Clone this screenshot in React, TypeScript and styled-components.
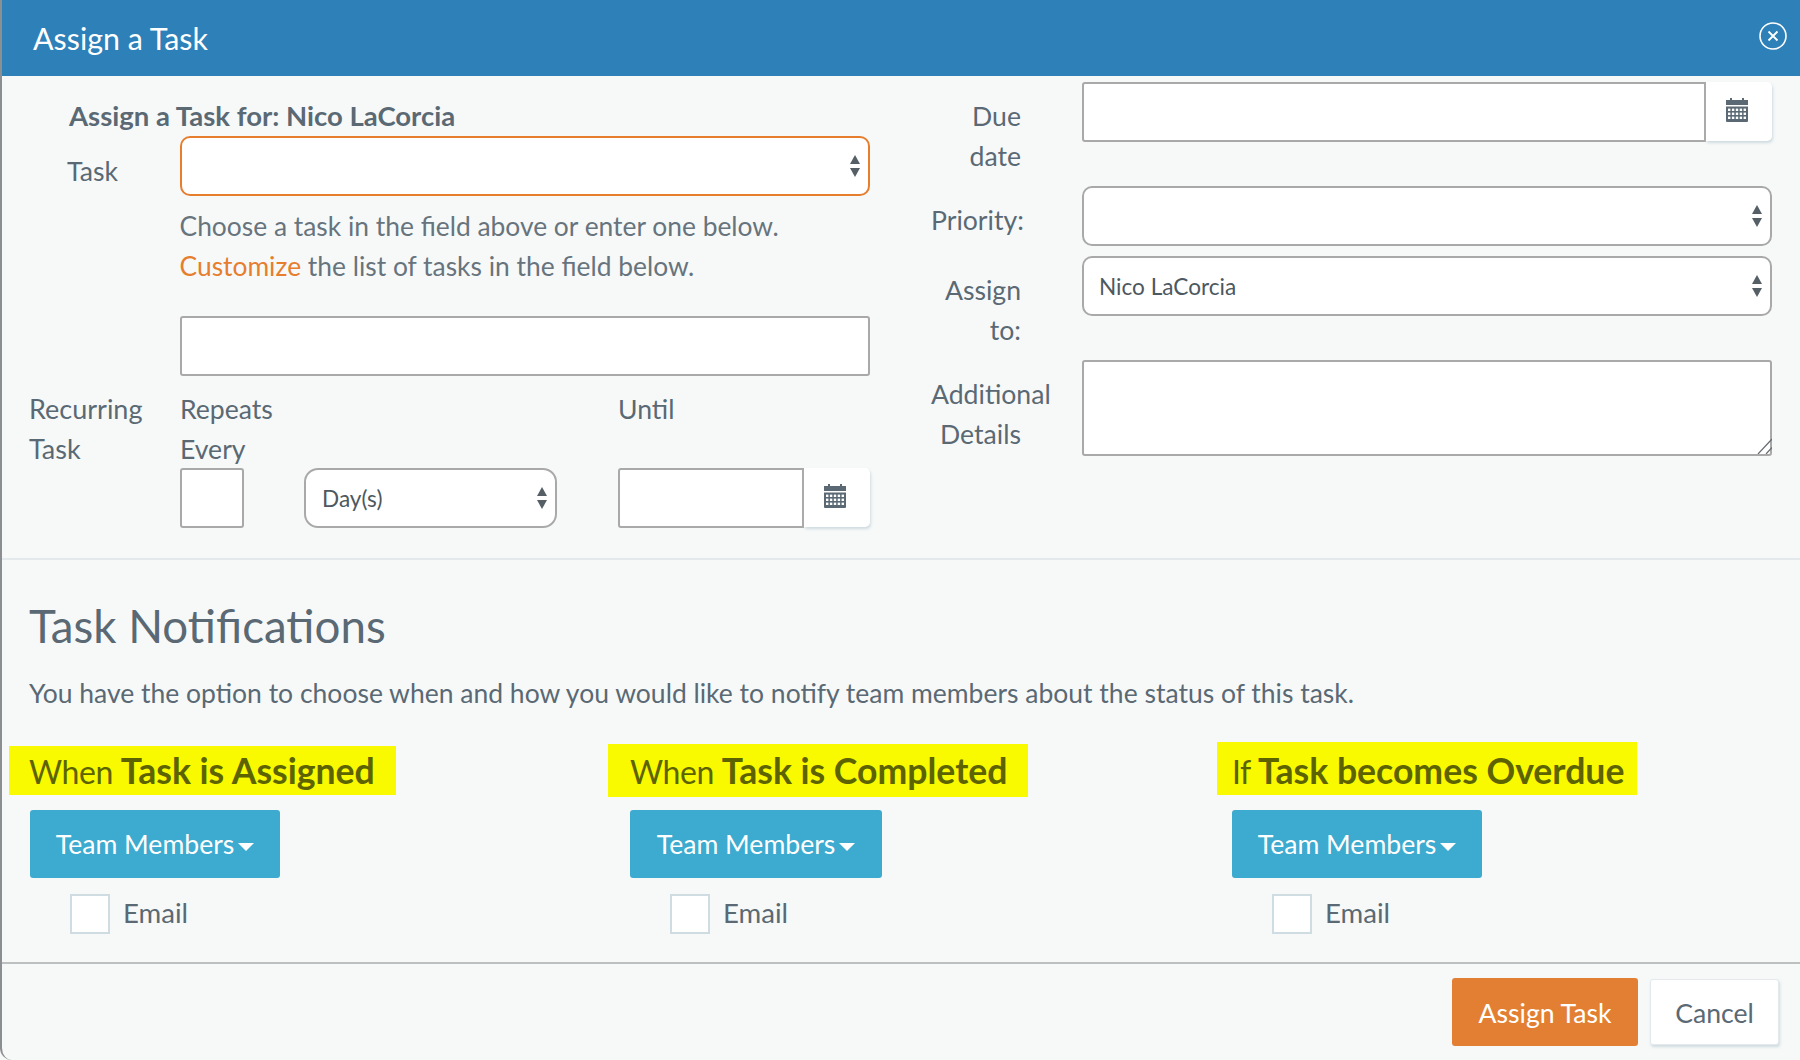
import React from "react";
import styled, { createGlobalStyle } from "styled-components";

const GlobalStyle = createGlobalStyle`
    html, body {
        margin: 0;
        padding: 0;
        background: #f7f9f9;
    }
    * {
        box-sizing: border-box;
    }
    body {
        color: #5a6974;
        font-family: Lato, "Open Sans", sans-serif;
        font-size: 26.6px;
        line-height: 40px;
    }
`;

const CalendarIcon: React.FC = () => {
    const cells = [];
    for (let row = 0; row < 3; row++) {
        for (let col = 0; col < 5; col++) {
            cells.push(
                <rect key={`${row}-${col}`} x={2 + col * 3.9} y={10.6 + row * 4} width="2.4" height="2.4" fill="#fff" />
            );
        }
    }
    return (
        <svg width="22" height="24" viewBox="0 0 22 24" fill="#5a6974">
            <rect x="4" y="0" width="2" height="3" />
            <rect x="16" y="0" width="2" height="3" />
            <rect x="0" y="2" width="22" height="5" />
            <path d="M0 8.5h22V23a1 1 0 0 1-1 1H1a1 1 0 0 1-1-1z" />
            {cells}
        </svg>
    );
};

const SelectArrows: React.FC = () => (
    <ArrowSvg width="12" height="22" viewBox="0 0 12 22" fill="#555f66">
        <path d="M6 0l5 9H1z" />
        <path d="M6 22l5-9H1z" />
    </ArrowSvg>
);

const SelectField: React.FC<{ value?: string; $radius?: number; $focused?: boolean; width?: number }> = ({
    value,
    $radius,
    $focused,
    width,
}) => (
    <SelectWrap $width={width}>
        <NativeSelect defaultValue={value ?? ""} $radius={$radius} $focused={$focused}>
            <option value={value ?? ""}>{value ?? ""}</option>
        </NativeSelect>
        <SelectArrows />
    </SelectWrap>
);

const DateField: React.FC = () => (
    <DateGroup>
        <DateInput type="text" />
        <DateAddon>
            <CalendarIcon />
        </DateAddon>
    </DateGroup>
);

const notifications = [
    {
        lead: "When",
        strong: "Task is Assigned",
        top: 4,
        padTop: 6,
        padBottom: 3,
        left: -21,
        padLeft: 20,
        padRight: 21,
        below: 15,
        buttonWidth: 250,
    },
    {
        lead: "When",
        strong: "Task is Completed",
        top: 2,
        padTop: 8,
        padBottom: 5,
        left: -22,
        padLeft: 22,
        padRight: 21,
        below: 13,
        buttonWidth: 252,
    },
    {
        lead: "If",
        strong: "Task becomes Overdue",
        top: 0,
        padTop: 10,
        padBottom: 3,
        left: -15,
        padLeft: 15,
        padRight: 13,
        below: 15,
        buttonWidth: 250,
    },
];

const App: React.FC = () => {
    return (
        <Modal>
            <GlobalStyle />
            <Header>
                <HeaderTitle>Assign a Task</HeaderTitle>
                <CloseButton aria-label="Close">
                    <svg width="28" height="28" viewBox="0 0 28 28" fill="none" stroke="#fff" strokeWidth="1.6">
                        <circle cx="14" cy="14" r="13" />
                        <path d="M9.5 9.5l9 9M18.5 9.5l-9 9" strokeWidth="1.8" />
                    </svg>
                </CloseButton>
            </Header>

            <FormSection>
                <LeftForm>
                    <FormTitle>Assign a Task for: Nico LaCorcia</FormTitle>
                    <TaskRow>
                        <TaskLabel>Task</TaskLabel>
                        <SelectField $focused />
                    </TaskRow>
                    <HelpText>
                        Choose a task in the field above or enter one below.
                        <br />
                        <OrangeLink>Customize</OrangeLink> the list of tasks in the field below.
                    </HelpText>
                    <CustomTaskInput type="text" />
                    <RecurringRow>
                        <RecurringLabel>
                            Recurring
                            <br />
                            Task
                        </RecurringLabel>
                        <RecurringFields>
                            <RepeatLabel>
                                Repeats
                                <br />
                                Every
                            </RepeatLabel>
                            <RepeatLabel>Until</RepeatLabel>
                            <RepeatControls>
                                <NumberInput type="text" />
                                <SelectField value="Day(s)" $radius={14} width={253} />
                            </RepeatControls>
                            <DateField />
                        </RecurringFields>
                    </RecurringRow>
                </LeftForm>

                <RightForm>
                    <RightRow>
                        <RightLabel>Due date</RightLabel>
                        <DateField />
                    </RightRow>
                    <RightRow>
                        <RightLabel>Priority:</RightLabel>
                        <SelectField />
                    </RightRow>
                    <RightRow>
                        <RightLabel>Assign to:</RightLabel>
                        <SelectField value="Nico LaCorcia" />
                    </RightRow>
                    <RightRow>
                        <RightLabel>Additional Details</RightLabel>
                        <DetailsWrap>
                            <DetailsArea />
                            <ResizeGrip width="16" height="16" viewBox="0 0 16 16" stroke="#666d72" strokeWidth="1.2">
                                <path d="M2 16L16 1M10 16l6-6.5" />
                            </ResizeGrip>
                        </DetailsWrap>
                    </RightRow>
                </RightForm>
            </FormSection>

            <NotificationSection>
                <SectionTitle>Task Notifications</SectionTitle>
                <SectionText>
                    You have the option to choose when and how you would like to notify team members about the status
                    of this task.
                </SectionText>
                <NotificationGrid>
                    {notifications.map((item) => (
                        <NotificationColumn key={item.strong}>
                            <Highlight
                                $top={item.top}
                                $padTop={item.padTop}
                                $padBottom={item.padBottom}
                                $left={item.left}
                                $padLeft={item.padLeft}
                                $padRight={item.padRight}
                                $below={item.below}
                            >
                                {item.lead} <strong>{item.strong}</strong>
                            </Highlight>
                            <TeamButton $width={item.buttonWidth}>
                                Team Members
                                <Caret />
                            </TeamButton>
                            <EmailRow>
                                <EmailCheck />
                                <EmailText>Email</EmailText>
                            </EmailRow>
                        </NotificationColumn>
                    ))}
                </NotificationGrid>
            </NotificationSection>

            <Footer>
                <PrimaryButton>Assign Task</PrimaryButton>
                <CancelButton>Cancel</CancelButton>
            </Footer>
        </Modal>
    );
};

export default App;

const Modal = styled.div`
    background: #f7f9f9;
    border-bottom-left-radius: 12px;
    border-left: 2px solid #8c8f91;
    display: flex;
    flex-direction: column;
    height: 1060px;
    overflow: hidden;
    width: 1800px;
`;

const Header = styled.header`
    align-items: center;
    background: #2e80b8;
    display: flex;
    flex: none;
    height: 76px;
    justify-content: space-between;
    padding: 0 13px 0 31px;
`;

const HeaderTitle = styled.h1`
    color: #fff;
    font-size: 30.4px;
    font-weight: 400;
    margin: 0;
`;

const CloseButton = styled.button`
    background: none;
    border: none;
    display: flex;
    margin-bottom: 4px;
    padding: 0;
`;

const FormSection = styled.section`
    border-bottom: 2px solid #e4e9eb;
    display: flex;
    flex: none;
    height: 484px;
`;

const LeftForm = styled.div`
    padding: 22px 0 0 27px;
    width: 929px;
`;

const FormTitle = styled.h2`
    font-size: 27.5px;
    font-weight: 700;
    line-height: 36px;
    margin: 0 0 2px;
    padding-left: 40px;
`;

const TaskRow = styled.div`
    display: grid;
    grid-template-columns: 151px 690px;
`;

const TaskLabel = styled.label`
    padding: 15px 0 0 38px;
`;

const HelpText = styled.p`
    color: #67747d;
    font-size: 26.4px;
    margin: 10px 0 0 150.5px;
`;

const OrangeLink = styled.a`
    color: #e67e2e;
`;

const fieldBorder = `
    background: #fff;
    border: 2px solid #a9a9a9;
    display: block;
    font-family: inherit;
    height: 60px;
    outline: none;
`;

const CustomTaskInput = styled.input`
    ${fieldBorder}
    border-radius: 3px;
    margin: 30px 0 0 151px;
    width: 690px;
`;

const RecurringRow = styled.div`
    display: grid;
    grid-template-columns: 151px 690px;
    margin-top: 13px;
`;

const RecurringLabel = styled.div`
    font-size: 27px;
`;

const RecurringFields = styled.div`
    display: grid;
    grid-template-columns: 438px 252px;
    grid-template-rows: 79px 60px;
`;

const RepeatLabel = styled.div``;

const RepeatControls = styled.div`
    column-gap: 60px;
    display: flex;
`;

const NumberInput = styled.input`
    ${fieldBorder}
    border-radius: 3px;
    width: 64px;
`;

const SelectWrap = styled.div<{ $width?: number }>`
    position: relative;
    width: ${(p) => (p.$width ? `${p.$width}px` : "100%")};
`;

const NativeSelect = styled.select<{ $radius?: number; $focused?: boolean }>`
    ${fieldBorder}
    appearance: none;
    border-color: ${(p) => (p.$focused ? "#e67e2e" : "#a9a9a9")};
    border-radius: ${(p) => p.$radius ?? 10}px;
    color: #4d5860;
    font-size: 22.6px;
    padding: 0 30px 0 ${(p) => (p.$radius ? 16 : 15)}px;
    width: 100%;
`;

const ArrowSvg = styled.svg`
    pointer-events: none;
    position: absolute;
    right: 9px;
    top: 19px;
`;

const DateGroup = styled.div`
    display: flex;
    width: 100%;
`;

const DateInput = styled.input`
    ${fieldBorder}
    border-radius: 3px 0 0 3px;
    flex: 1;
    min-width: 0;
`;

const DateAddon = styled.span`
    align-items: center;
    background: #fff;
    border-radius: 0 5px 5px 0;
    box-shadow: 1px 2px 3px rgba(190, 205, 212, 0.7);
    display: flex;
    flex: none;
    height: 59px;
    justify-content: center;
    padding: 0 5px 4px 0;
    width: 66px;
`;

const RightForm = styled.div`
    display: flex;
    flex-direction: column;
    padding-top: 6px;
    row-gap: 10px;
    width: 841px;
`;

const RightRow = styled.div`
    display: grid;
    grid-template-columns: 151px 690px;
`;

const RightLabel = styled.label`
    padding-top: 14px;
    text-align: right;
    width: 90px;
`;

const DetailsWrap = styled.div`
    position: relative;
`;

const DetailsArea = styled.textarea`
    ${fieldBorder}
    border-radius: 3px;
    height: 96px;
    resize: none;
    width: 690px;
`;

const ResizeGrip = styled.svg`
    bottom: 2px;
    pointer-events: none;
    position: absolute;
    right: 0;
`;

const NotificationSection = styled.section`
    border-bottom: 2px solid #bcc0c0;
    flex: none;
    height: 404px;
    padding: 36px 0 0 27px;
`;

const SectionTitle = styled.h2`
    font-size: 45.7px;
    font-weight: 400;
    line-height: 60px;
    margin: 0;
`;

const SectionText = styled.p`
    font-size: 26.5px;
    margin: 17px 0 0;
`;

const NotificationGrid = styled.div`
    display: grid;
    grid-template-columns: 600px 602px 1fr;
    margin: 29px 0 0 1px;
`;

const NotificationColumn = styled.div`
    align-items: flex-start;
    display: flex;
    flex-direction: column;
`;

const Highlight = styled.h3<{
    $top: number;
    $padTop: number;
    $padBottom: number;
    $left: number;
    $padLeft: number;
    $padRight: number;
    $below: number;
}>`
    background: #f9fa00;
    color: #5c6300;
    font-size: 32px;
    font-weight: 400;
    height: ${(p) => 40 + p.$padTop + p.$padBottom}px;
    letter-spacing: -0.4px;
    line-height: 40px;
    margin: ${(p) => p.$top}px 0 ${(p) => p.$below}px ${(p) => p.$left}px;
    padding: ${(p) => p.$padTop}px ${(p) => p.$padRight}px ${(p) => p.$padBottom}px ${(p) => p.$padLeft}px;
    white-space: nowrap;

    strong {
        font-size: 35.6px;
        font-weight: 700;
        letter-spacing: 0;
        line-height: 1;
    }
`;

const TeamButton = styled.button<{ $width: number }>`
    align-items: center;
    background: #3dabcf;
    border: none;
    border-radius: 3px;
    color: #fff;
    column-gap: 4px;
    display: flex;
    font-family: inherit;
    font-size: 26.6px;
    height: 68px;
    justify-content: center;
    padding: 0;
    width: ${(p) => p.$width}px;
`;

const Caret = styled.span`
    border-left: 8px solid transparent;
    border-right: 8px solid transparent;
    border-top: 8px solid #fff;
    margin-top: 5px;
`;

const EmailRow = styled.label`
    align-items: center;
    column-gap: 13px;
    display: flex;
    margin: 15px 0 0 40px;
`;

const EmailCheck = styled.span`
    background: #fff;
    border: 2px solid #cfdce1;
    display: block;
    height: 40px;
    width: 40px;
`;

const EmailText = styled.span`
    font-size: 27.6px;
    padding-bottom: 2px;
`;

const Footer = styled.footer`
    column-gap: 12px;
    display: flex;
    justify-content: flex-end;
    padding: 14px 21px 0 0;
`;

const PrimaryButton = styled.button`
    background: #e37f33;
    border: none;
    border-radius: 3px;
    color: #fff;
    font-family: inherit;
    font-size: 26.6px;
    height: 68px;
    padding: 2px 0 0;
    width: 186px;
`;

const CancelButton = styled.button`
    background: #fff;
    border: 1px solid #e3e9ec;
    border-radius: 3px;
    box-shadow: 1px 2px 3px rgba(190, 205, 212, 0.7);
    color: #5a6974;
    font-family: inherit;
    font-size: 26.6px;
    height: 66px;
    margin-top: 1px;
    padding: 2px 0 0;
    width: 129px;
`;
